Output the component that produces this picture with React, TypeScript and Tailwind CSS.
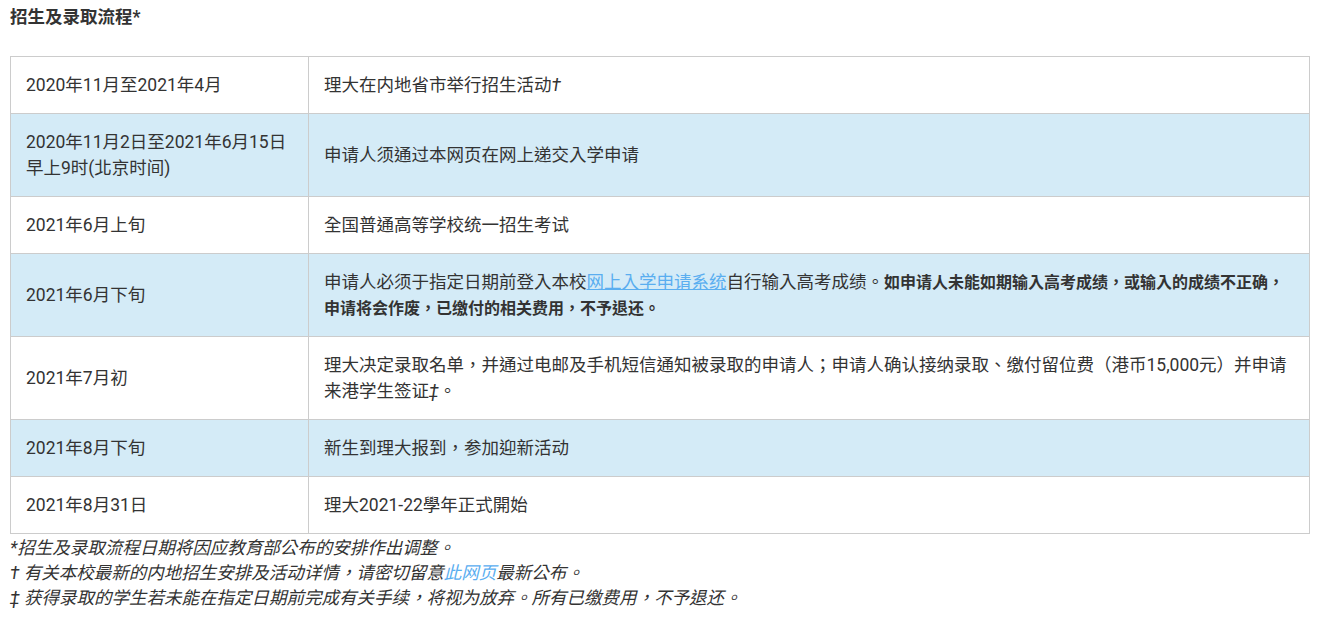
import React from "react";

const rows: { date: React.ReactNode; desc: React.ReactNode; blue: boolean }[] = [
  { date: "2020年11月至2021年4月", desc: <>理大在内地省市举行招生活动<i>†</i></>, blue: false },
  {
    date: <>2020年11月2日至2021年6月15日<br />早上9时(北京时间)</>,
    desc: "申请人须通过本网页在网上递交入学申请",
    blue: true,
  },
  { date: "2021年6月上旬", desc: "全国普通高等学校统一招生考试", blue: false },
  {
    date: "2021年6月下旬",
    desc: (
      <>
        申请人必须于指定日期前登入本校
        <a href="#" className="text-[#5aaef0] underline">网上入学申请系统</a>
        自行输入高考成绩。
        <b className="text-[16px] leading-[18px]">如申请人未能如期输入高考成绩，或输入的成绩不正确，<br />申请将会作废，已缴付的相关费用，不予退还。</b>
      </>
    ),
    blue: true,
  },
  {
    date: "2021年7月初",
    desc: (
      <>
        <span className="whitespace-nowrap">理大决定录取名单，并通过电邮及手机短信通知被录取的申请人；申请人确认接纳录取、缴付留位费（港币15,000元）并申请</span>
        <br />
        来港学生签证<i>‡</i>。
      </>
    ),
    blue: false,
  },
  { date: "2021年8月下旬", desc: "新生到理大报到，参加迎新活动", blue: true },
  { date: "2021年8月31日", desc: "理大2021-22學年正式開始", blue: false },
];

export default function App() {
  return (
    <div
      className="w-[1317px] h-[620px] bg-white text-[#333] text-[17.5px] pl-[10px] overflow-hidden"
      style={{ fontFamily: 'Roboto, "Noto Sans CJK TC", sans-serif' }}
    >
      <div className="pt-[4px] leading-[26px] font-bold">招生及录取流程*</div>
      <table className="mt-[26px] w-[1300px] table-fixed border-collapse border border-[#cccccc]">
        <tbody>
          {rows.map((r, i) => (
            <tr key={i} className={r.blue ? "bg-[#d4ebf7]" : "bg-white"}>
              <td className="w-[298px] border border-[#cccccc] px-[15px] py-[15px] leading-[26px] align-middle">
                {r.date}
              </td>
              <td className="border border-[#cccccc] px-[15px] py-[15px] leading-[26px] align-middle">
                {r.desc}
              </td>
            </tr>
          ))}
        </tbody>
      </table>
      <div className="italic leading-[25px] pt-[2px]">
        <div>*招生及录取流程日期将因应教育部公布的安排作出调整。</div>
        <div>† 有关本校最新的内地招生安排及活动详情，请密切留意<a href="#" className="text-[#5aaef0]">此网页</a>最新公布。</div>
        <div>‡ 获得录取的学生若未能在指定日期前完成有关手续，将视为放弃。所有已缴费用，不予退还。</div>
      </div>
    </div>
  );
}
